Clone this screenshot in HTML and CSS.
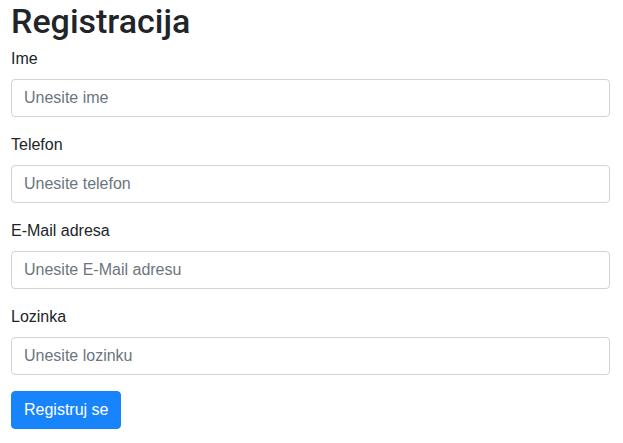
FILE: index.html
```html
<!DOCTYPE html>
<html lang="hr">
<head>
<meta charset="utf-8">
<title>Registracija</title>
<link rel="stylesheet" href="styles.css">
</head>
<body>
<main class="page">
  <h1 class="title">Registracija</h1>
  <form class="form">
    <div class="form-group">
      <label class="label" for="ime">Ime</label>
      <input class="input" id="ime" type="text" placeholder="Unesite ime">
    </div>
    <div class="form-group">
      <label class="label" for="tel">Telefon</label>
      <input class="input" id="tel" type="text" placeholder="Unesite telefon">
    </div>
    <div class="form-group">
      <label class="label" for="mail">E-Mail adresa</label>
      <input class="input" id="mail" type="email" placeholder="Unesite E-Mail adresu">
    </div>
    <div class="form-group">
      <label class="label" for="loz">Lozinka</label>
      <input class="input" id="loz" type="password" placeholder="Unesite lozinku">
    </div>
    <button class="btn" type="submit">Registruj se</button>
  </form>
</main>
</body>
</html>
```

FILE: styles.css
```css
* { box-sizing: border-box; }
html, body { margin: 0; padding: 0; background: #fff; }
body {
  font-family: "Liberation Sans", Arial, sans-serif;
  font-size: 16px;
  line-height: 1.5;
  color: #212529;
}
.page {
  padding: 0 13px 0 11px;
}
.title {
  margin: 0 0 4px;
  font-family: Roboto, "Liberation Sans", sans-serif;
  font-size: 34px;
  font-weight: 500;
  line-height: 43px;
  color: #212529;
}
.form { margin: 0; }
.form-group {
  display: flex;
  flex-direction: column;
  margin-bottom: 16px;
}
.label {
  display: block;
  margin-bottom: 8px;
}
.input {
  display: block;
  width: 100%;
  height: 38px;
  padding: 6px 12px;
  font-family: inherit;
  font-size: 16px;
  line-height: 1.5;
  color: #495057;
  background: #fff;
  border: 1px solid #ced4da;
  border-radius: 4px;
  outline: none;
}
.input::placeholder { color: #6c757d; opacity: 1; }
.btn {
  display: inline-block;
  height: 38px;
  padding: 6px 12px;
  font-family: inherit;
  font-size: 16px;
  line-height: 1.5;
  font-weight: 400;
  color: #fff;
  background: #1784fb;
  border: 1px solid #1784fb;
  border-radius: 4px;
  cursor: pointer;
}
```
